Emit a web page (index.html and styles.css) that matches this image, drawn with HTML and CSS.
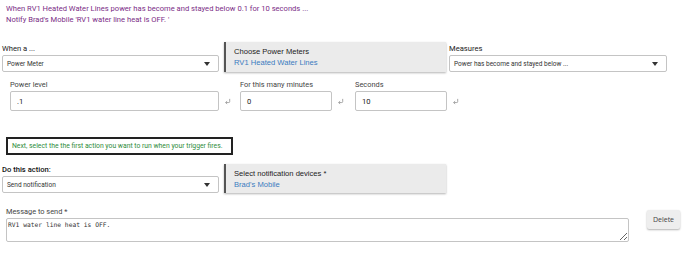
FILE: index.html
```html
<!DOCTYPE html>
<html lang="en">
<head>
    <meta charset="UTF-8">
    <title>Rule Trigger</title>
    <link rel="stylesheet" href="styles.css">
</head>
<body>
    <div class="summary">
        <div>When RV1 Heated Water Lines power has become and stayed below 0.1 for 10 seconds ...</div>
        <div>Notify Brad's Mobile 'RV1 water line heat is OFF. '</div>
    </div>

    <div class="row trigger-row">
        <div class="field col-a">
            <label>When a ...</label>
            <div class="select"><span>Power Meter</span><i class="caret"></i></div>
        </div>
        <div class="chooser">
            <div class="chooser-title">Choose Power Meters</div>
            <div class="chooser-value">RV1 Heated Water Lines</div>
        </div>
        <div class="field col-c">
            <label>Measures</label>
            <div class="select"><span>Power has become and stayed below ...</span><i class="caret"></i></div>
        </div>
    </div>

    <div class="row params-row">
        <div class="param wide">
            <div class="field">
                <label class="small">Power level</label>
                <div class="input">.1</div>
            </div>
            <svg class="enter" viewBox="0 0 8 8"><path d="M6.5 1v3.2a1 1 0 0 1-1 1H2M3.6 3.6 1.8 5.2l1.8 1.6" fill="none" stroke="#9a9a9a" stroke-width="1"/></svg>
        </div>
        <div class="param">
            <div class="field">
                <label class="small">For this many minutes</label>
                <div class="input narrow">0</div>
            </div>
            <svg class="enter" viewBox="0 0 8 8"><path d="M6.5 1v3.2a1 1 0 0 1-1 1H2M3.6 3.6 1.8 5.2l1.8 1.6" fill="none" stroke="#9a9a9a" stroke-width="1"/></svg>
        </div>
        <div class="param">
            <div class="field">
                <label class="small">Seconds</label>
                <div class="input narrow">10</div>
            </div>
            <svg class="enter" viewBox="0 0 8 8"><path d="M6.5 1v3.2a1 1 0 0 1-1 1H2M3.6 3.6 1.8 5.2l1.8 1.6" fill="none" stroke="#9a9a9a" stroke-width="1"/></svg>
        </div>
    </div>

    <div class="hint">Next, select the the first action you want to run when your trigger fires.</div>

    <div class="row action-row">
        <div class="field col-a">
            <label class="strong">Do this action:</label>
            <div class="select"><span>Send notification</span><i class="caret"></i></div>
        </div>
        <div class="chooser">
            <div class="chooser-title">Select notification devices *</div>
            <div class="chooser-value">Brad's Mobile</div>
        </div>
    </div>

    <div class="row message-row">
        <div class="field">
            <label class="small">Message to send *</label>
            <textarea class="message">RV1 water line heat is OFF.</textarea>
        </div>
        <button class="delete-btn">Delete</button>
    </div>
</body>
</html>
```

FILE: styles.css
```css
body {
    margin: 0;
    width: 690px;
    height: 260px;
    background: #fff;
    font-family: Roboto, "Liberation Sans", sans-serif;
    font-size: 8px;
    color: #333;
    overflow: hidden;
}

.summary {
    padding: 3px 6px 0;
    color: #7b2d86;
    line-height: 11px;
    font-size: 7.6px;
}

.row {
    display: flex;
    align-items: flex-end;
}

.field {
    display: flex;
    flex-direction: column;
}

.field label {
    font-size: 7.6px;
    line-height: 10px;
    color: #222;
    margin-bottom: 1px;
}

.field label.small {
    font-size: 7.4px;
    color: #444;
    margin-bottom: 1px;
}

.field label.strong {
    font-weight: 500;
    color: #111;
}

.trigger-row {
    margin-top: 17px;
    padding-left: 2px;
}

.col-a {
    width: 217px;
}

.col-c {
    width: 218px;
    margin-left: 3px;
}

.select {
    display: flex;
    align-items: center;
    justify-content: space-between;
    height: 17px;
    box-sizing: border-box;
    border: 1px solid #c4c4c4;
    border-radius: 2px;
    padding: 0 8px 0 4px;
    font-size: 6.5px;
    color: #333;
    background: #fff;
}

.caret {
    width: 0;
    height: 0;
    border-left: 3px solid transparent;
    border-right: 3px solid transparent;
    border-top: 4px solid #333;
}

.chooser {
    width: 222px;
    height: 30px;
    box-sizing: border-box;
    margin-left: 5px;
    padding: 4px 8px 0 8px;
    background: #ebebeb;
    border-left: 2px solid #555;
    box-shadow: 0 1px 2px rgba(0, 0, 0, 0.3);
    font-family: "Liberation Sans", Arial, sans-serif;
    font-size: 7.6px;
    line-height: 11px;
}

.chooser-title {
    color: #222;
}

.chooser-value {
    color: #3a7bbf;
}

.params-row {
    margin-top: 8px;
    padding-left: 10px;
}

.param {
    display: flex;
    align-items: flex-end;
    width: 115px;
}

.param.wide {
    width: 230px;
}

.input {
    height: 20px;
    box-sizing: border-box;
    border: 1px solid #c4c4c4;
    border-radius: 2px;
    padding: 0 6px;
    display: flex;
    align-items: center;
    font-size: 7.6px;
    color: #222;
    width: 209px;
}

.input.narrow {
    width: 92px;
}

.enter {
    width: 7px;
    height: 7px;
    margin: 0 0 6px 5px;
}

.hint {
    margin: 26px 0 0 6px;
    width: 227px;
    height: 18px;
    box-sizing: border-box;
    border: 2px solid #222;
    padding-left: 4px;
    display: flex;
    align-items: center;
    font-size: 6.8px;
    color: #2e8b3a;
    white-space: nowrap;
}

.action-row {
    margin-top: 9px;
    padding-left: 2px;
}

.action-row .chooser {
    height: 29px;
}

.message-row {
    margin-top: 14px;
    padding-left: 6px;
    align-items: flex-start;
}

.message {
    width: 623px;
    height: 24px;
    box-sizing: border-box;
    border: 1px solid #c4c4c4;
    border-radius: 2px;
    padding: 2px 1px;
    font-family: "DejaVu Sans Mono", "Liberation Mono", monospace;
    font-size: 6.3px;
    color: #333;
    resize: vertical;
    margin: 0;
}

.delete-btn {
    margin: 3px 0 0 18px;
    width: 33px;
    height: 19px;
    padding: 0;
    border: none;
    border-radius: 2px;
    background: #eeeeee;
    box-shadow: 0 1px 2px rgba(0, 0, 0, 0.3);
    font-family: "Open Sans", sans-serif;
    font-size: 7px;
    color: #444;
    cursor: pointer;
}
```
